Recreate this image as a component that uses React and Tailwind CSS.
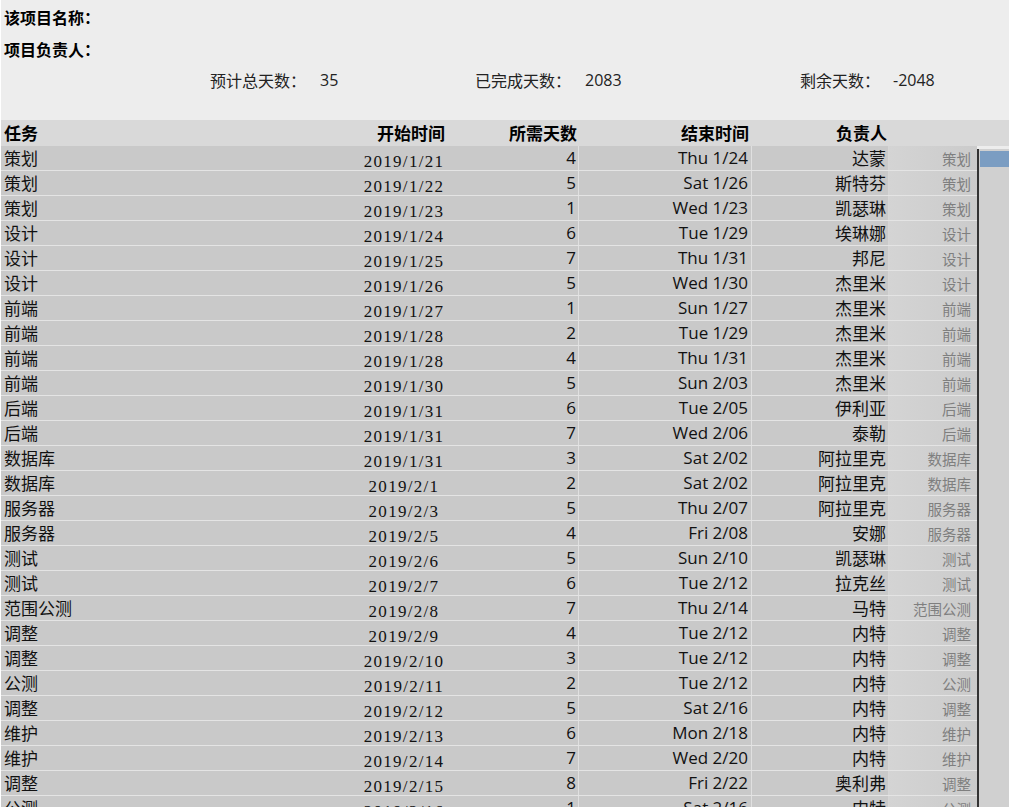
import React from "react";

const rows = [
  ["策划", "2019/1/21", 4, "Thu 1/24", "达蒙"],
  ["策划", "2019/1/22", 5, "Sat 1/26", "斯特芬"],
  ["策划", "2019/1/23", 1, "Wed 1/23", "凯瑟琳"],
  ["设计", "2019/1/24", 6, "Tue 1/29", "埃琳娜"],
  ["设计", "2019/1/25", 7, "Thu 1/31", "邦尼"],
  ["设计", "2019/1/26", 5, "Wed 1/30", "杰里米"],
  ["前端", "2019/1/27", 1, "Sun 1/27", "杰里米"],
  ["前端", "2019/1/28", 2, "Tue 1/29", "杰里米"],
  ["前端", "2019/1/28", 4, "Thu 1/31", "杰里米"],
  ["前端", "2019/1/30", 5, "Sun 2/03", "杰里米"],
  ["后端", "2019/1/31", 6, "Tue 2/05", "伊利亚"],
  ["后端", "2019/1/31", 7, "Wed 2/06", "泰勒"],
  ["数据库", "2019/1/31", 3, "Sat 2/02", "阿拉里克"],
  ["数据库", "2019/2/1", 2, "Sat 2/02", "阿拉里克"],
  ["服务器", "2019/2/3", 5, "Thu 2/07", "阿拉里克"],
  ["服务器", "2019/2/5", 4, "Fri 2/08", "安娜"],
  ["测试", "2019/2/6", 5, "Sun 2/10", "凯瑟琳"],
  ["测试", "2019/2/7", 6, "Tue 2/12", "拉克丝"],
  ["范围公测", "2019/2/8", 7, "Thu 2/14", "马特"],
  ["调整", "2019/2/9", 4, "Tue 2/12", "内特"],
  ["调整", "2019/2/10", 3, "Tue 2/12", "内特"],
  ["公测", "2019/2/11", 2, "Tue 2/12", "内特"],
  ["调整", "2019/2/12", 5, "Sat 2/16", "内特"],
  ["维护", "2019/2/13", 6, "Mon 2/18", "内特"],
  ["维护", "2019/2/14", 7, "Wed 2/20", "内特"],
  ["调整", "2019/2/15", 8, "Fri 2/22", "奥利弗"],
  ["公测", "2019/2/16", 1, "Sat 2/16", "内特"],
];

const cjk = "font-['Noto_Sans_CJK_SC',sans-serif]";
const latin = "font-['Open_Sans','Noto_Sans_CJK_SC',sans-serif]";

const Stat = ({ label, value, className }) => (
  <div className={`flex items-center ${className}`}>
    <span className={`${cjk} text-[16px] text-[#222]`}>{label}</span>
    <span className={`${latin} text-[16px] text-[#222]`}>{value}</span>
  </div>
);

export default function App() {
  return (
    <div className="w-[1009px] h-[807px] overflow-hidden bg-[#ededed] border-l border-white text-black">
      {/* project info */}
      <div className="h-[120px] flex flex-col">
        <div className={`${cjk} font-bold text-[16px] h-[34px] pt-[5px] pl-[3px]`}>该项目名称：</div>
        <div className={`${cjk} font-bold text-[16px] h-[30px] pt-[3px] pl-[3px]`}>项目负责人：</div>
        <div className="flex h-[30px] pt-[2px]">
          <Stat label="预计总天数：" value="35" className="ml-[209px] w-[265px] gap-[14px]" />
          <Stat label="已完成天数：" value="2083" className="w-[325px] gap-[14px]" />
          <Stat label="剩余天数：" value="-2048" className="gap-[13px]" />
        </div>
      </div>

      {/* header */}
      <div className={`${cjk} font-bold text-[17px] h-[26px] bg-[#d9d9d9] flex items-center`}>
        <div className="w-[359px] pl-[3px]">任务</div>
        <div className="w-[88px] text-right pr-[3px]">开始时间</div>
        <div className="w-[131px] text-right pr-[2px]">所需天数</div>
        <div className="w-[173px] text-right pr-[3px]">结束时间</div>
        <div className="w-[137px] text-right pr-[2px]">负责人</div>
      </div>

      {/* rows + chart */}
      <div className="flex">
        <div className="w-[976px] shrink-0">
          {rows.map((r, i) => (
            <div key={i} className="h-[25px] flex bg-[#c9c9c9] border-b border-[#e4e4e4] text-[17px] leading-[24px] text-[#111]">
              <div className={`${cjk} w-[359px] pl-[3px]`}>{r[0]}</div>
              <div className="w-[88px] text-center pt-[4px] font-['Liberation_Serif',serif] tracking-[1.3px] text-[17px]">{r[1]}</div>
              <div className={`${latin} w-[131px] text-right pr-[2px] border-r border-[#e0e0e0]`}>{r[2]}</div>
              <div className={`${latin} w-[173px] text-right pr-[3px] border-r border-[#e0e0e0]`}>{r[3]}</div>
              <div className={`${cjk} w-[137px] text-right pr-[2px] border-r border-[#d6d6d6]`}>{r[4]}</div>
              <div className={`${cjk} flex-1 text-right pr-[6px] pt-[1px] text-[14.5px] text-[#7f7f7f] bg-gradient-to-r from-[#d4d4d4] to-[#cbcbcb]`}>{r[0]}</div>
            </div>
          ))}
        </div>
        <div className="flex-1 mt-[3px] border-l-2 border-[#333] bg-[#d0d0d0] pt-[2px] pl-[1px]">
          <div className="h-[16px] bg-[#7b9dc2]" />
        </div>
      </div>
    </div>
  );
}
